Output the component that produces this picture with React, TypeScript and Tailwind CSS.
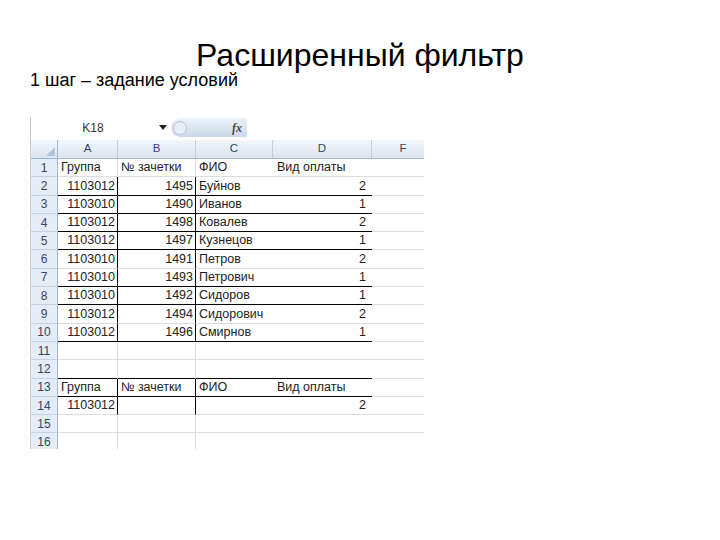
import React from "react";

type Row = {
  n: number;
  a?: string;
  b?: string;
  c?: string;
  d?: string;
  head?: boolean;
  boxed?: boolean;
  lineBelow?: boolean;
};

const rows: Row[] = [
  { n: 1, a: "Группа", b: "№ зачетки", c: "ФИО", d: "Вид оплаты", head: true },
  { n: 2, a: "1103012", b: "1495", c: "Буйнов", d: "2", boxed: true, lineBelow: true },
  { n: 3, a: "1103010", b: "1490", c: "Иванов", d: "1", boxed: true, lineBelow: true },
  { n: 4, a: "1103012", b: "1498", c: "Ковалев", d: "2", boxed: true, lineBelow: true },
  { n: 5, a: "1103012", b: "1497", c: "Кузнецов", d: "1", boxed: true, lineBelow: true },
  { n: 6, a: "1103010", b: "1491", c: "Петров", d: "2", boxed: true },
  { n: 7, a: "1103010", b: "1493", c: "Петрович", d: "1", boxed: true, lineBelow: true },
  { n: 8, a: "1103010", b: "1492", c: "Сидоров", d: "1", boxed: true, lineBelow: true },
  { n: 9, a: "1103012", b: "1494", c: "Сидорович", d: "2", boxed: true },
  { n: 10, a: "1103012", b: "1496", c: "Смирнов", d: "1", boxed: true, lineBelow: true },
  { n: 11 },
  { n: 12, lineBelow: true },
  { n: 13, a: "Группа", b: "№ зачетки", c: "ФИО", d: "Вид оплаты", head: true, boxed: true, lineBelow: true },
  { n: 14, a: "1103012", d: "2", boxed: true },
  { n: 15 },
  { n: 16 },
];

const SheetRow = ({ row }: { row: Row }) => {
  const bottom = row.lineBelow ? "border-b-black" : "border-b-[#dadcdd]";
  const side = row.boxed ? "border-r-black" : "border-r-[#dadcdd]";
  const align = row.head ? "justify-start pl-[3px]" : "justify-end pr-[2px]";
  return (
    <div className="flex h-[18.3px] text-[12.5px] text-[#222]">
      <div className="w-[27px] shrink-0 flex items-center justify-center bg-[#e4ecf7] border-r border-r-[#9eb6ce] border-b border-b-[#c5d2e3] text-[#34475e] text-[12px]">
        {row.n}
      </div>
      <div className={`w-[60px] shrink-0 flex items-center ${align} border-b border-r ${bottom} ${side}`}>
        {row.a}
      </div>
      <div className={`w-[78px] shrink-0 flex items-center ${align} border-b border-r ${bottom} ${side}`}>
        {row.b}
      </div>
      <div className={`w-[77px] shrink-0 flex items-center pl-[3px] whitespace-nowrap border-b ${bottom}`}>
        {row.c}
      </div>
      <div className={`w-[99px] shrink-0 flex items-center ${row.head ? "justify-start pl-[4px]" : "justify-end pr-[6px]"} border-b ${bottom}`}>
        {row.d}
      </div>
      <div className="w-[62px] shrink-0 border-b border-b-[#dadcdd]" />
    </div>
  );
};

const Sheet = () => {
  return (
    <div className="ml-[30px] mt-[28px] w-[394px] h-[332px] overflow-hidden border-l border-l-[#c5cdd8] font-['Liberation_Sans',Arial,sans-serif]">
      {/* formula bar */}
      <div className="flex h-[21px] items-center">
        <div className="w-[124px] text-center text-[12px] text-[#333]">K18</div>
        <div className="w-[16px] flex justify-center">
          <svg width="8" height="5" viewBox="0 0 8 5">
            <path d="M0 0 L8 0 L4 5 Z" fill="#222" />
          </svg>
        </div>
        <div className="w-[76px] h-[19px] rounded-l-full bg-gradient-to-b from-[#eef3f9] to-[#cbd8ea] flex items-center justify-between pl-[2px] pr-[5px]">
          <div className="w-[14px] h-[14px] rounded-full border border-[#b9c7da] bg-[#e8eef6]" />
          <span className="font-['Liberation_Serif',serif] italic font-bold text-[12px] text-[#4a4a4a]">fx</span>
        </div>
        <div className="flex-1" />
      </div>
      <div className="h-[2px]" />
      {/* column header */}
      <div className="flex h-[19px] bg-gradient-to-b from-[#f3f6fb] to-[#dbe4f0] border-b border-b-[#9eb6ce] text-[11.5px] text-[#34475e]">
        <div className="w-[27px] shrink-0 relative border-r border-r-[#9eb6ce]">
          <svg className="absolute right-[2px] bottom-[2px]" width="9" height="9" viewBox="0 0 9 9">
            <path d="M9 0 L9 9 L0 9 Z" fill="#b4c4d8" />
          </svg>
        </div>
        <div className="w-[60px] shrink-0 flex items-center justify-center border-r border-r-[#c0cfe0]">A</div>
        <div className="w-[78px] shrink-0 flex items-center justify-center border-r border-r-[#c0cfe0]">B</div>
        <div className="w-[77px] shrink-0 flex items-center justify-center border-r border-r-[#c0cfe0]">C</div>
        <div className="w-[99px] shrink-0 flex items-center justify-center border-r border-r-[#c0cfe0]">D</div>
        <div className="w-[62px] shrink-0 flex items-center justify-center">F</div>
      </div>
      {rows.map((r) => (
        <SheetRow key={r.n} row={r} />
      ))}
    </div>
  );
};

export default function App() {
  return (
    <div className="w-[720px] h-[540px] bg-white overflow-hidden font-['Liberation_Sans',Arial,sans-serif] text-black">
      <h1 className="pt-[39px] text-center text-[32px] leading-[32px]">Расширенный фильтр</h1>
      <p className="pl-[30px] text-[18px] leading-[18px]">1 шаг – задание условий</p>
      <Sheet />
    </div>
  );
}
